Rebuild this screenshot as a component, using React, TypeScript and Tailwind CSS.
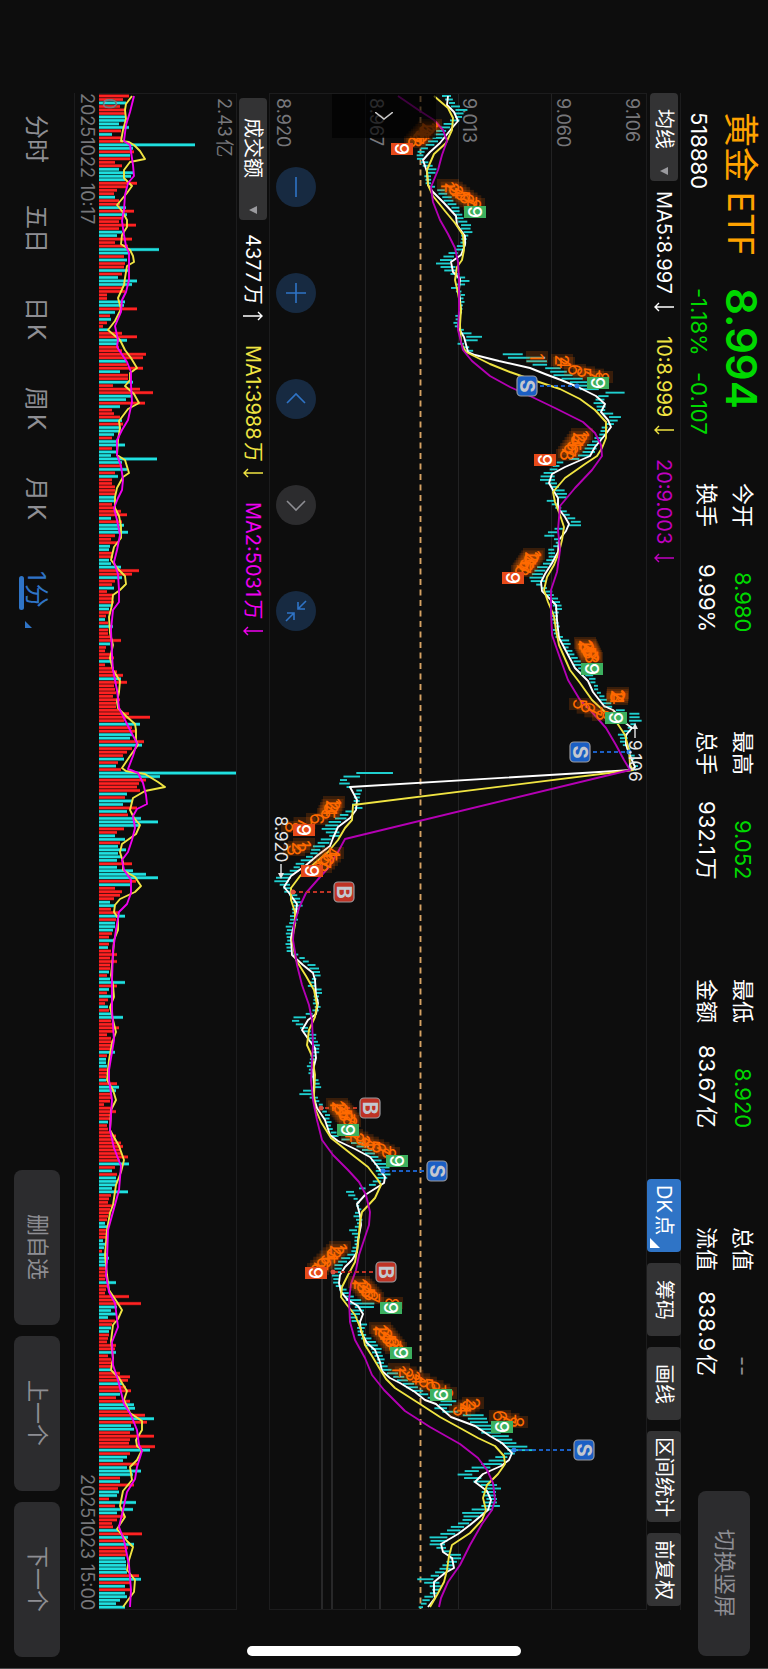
import React, { useState } from 'react';

// The whole screen is laid out in landscape: the inline axis runs from top to bottom,
// the block axis from right to left.

interface Stat {
  label: string;
  value: string;
  tone: string;
}

const stats: Stat[][] = [
  [
    { label: '今开', value: '8.980', tone: 'text-[#00d800]' },
    { label: '换手', value: '9.99%', tone: 'text-white' },
  ],
  [
    { label: '最高', value: '9.052', tone: 'text-[#00d800]' },
    { label: '总手', value: '932.1万', tone: 'text-white' },
  ],
  [
    { label: '最低', value: '8.920', tone: 'text-[#00d800]' },
    { label: '金额', value: '83.67亿', tone: 'text-white' },
  ],
  [
    { label: '总值', value: '--', tone: 'text-[#8e8e93]' },
    { label: '流值', value: '838.9亿', tone: 'text-white' },
  ],
];

const periods = ['分时', '五日', '日K', '周K', '月K', '1分'];
const tools = ['筹码', '画线', '区间统计', '前复权'];
const stockActions = ['删自选', '上一个', '下一个'];

const TOP = 94;
const HEIGHT = 1515;
const BAR_STEP = 3.49;
const barY = (i: number) => TOP + 2 + i * BAR_STEP;

// Turnover of each minute, negative when the price fell
const volumes = [
  30, 24, -27, 21, 27, 26, -26, -26, -20, -30, 22, -13, 23, 24, -96, -34, 35, -31, 31, 16,
  23, -20, -35, -32, -26, 38, 27, 18, 15, -16, 20, 21, -27, 35, -28, 23, 20, 37, 20, -23,
  -18, 33, 16, 29, -60, -30, 25, -28, 26, 25, -29, 23, -19, -38, -33, 24, 26, 8, 8, -26,
  -25, 38, -16, 11, -12, 8, 4, -9, 23, 38, -28, -19, 20, 23, 47, 44, -27, 28, 44, -21,
  29, 29, -34, 14, 41, 54, -33, -27, 46, -21, 13, 15, 21, -23, 24, -21, -21, -15, 13, -17,
  -26, 13, -17, -12, -58, -23, 23, -28, 16, -19, 13, 13, 16, 16, 16, -16, -16, 13, 16, 22,
  28, -12, 23, -25, -22, -29, 16, 12, 18, -11, -10, 14, 14, -10, -12, -22, 40, 33, -23, 16,
  13, -15, 8, 14, 14, 15, -12, -10, 12, 7, -6, 9, -14, 9, 9, 13, 22, -11, 7, 6,
  14, 15, -14, 6, 15, 18, 24, -22, 28, 15, 16, 17, 14, 21, 17, 17, 22, 30, 51, 25,
  -41, 33, 37, -33, -31, 45, -43, 33, 28, 24, -25, 19, -17, 22, -137, -61, 47, 40, 38, 41,
  -28, 26, -33, -24, 38, -28, 29, -42, -59, -41, 25, 18, -16, -26, 21, -19, -27, -19, -22, -18,
  33, -18, -34, -47, -59, 37, -31, 16, 23, 21, 15, -11, -16, 12, 19, -26, 17, -16, -16, -14,
  13, 10, -16, 10, -9, 12, 18, 11, 18, 11, 11, -10, 8, -11, -26, 18, -10, 8, -12, 9,
  6, -9, 10, -14, -24, 12, 14, 20, 15, 8, 12, 15, 13, 11, -16, 8, -7, -7, -8, 9,
  8, 7, -7, 18, -20, -17, 13, 13, 11, 5, 13, 17, 11, 12, -9, 8, 9, 11, 17, 17,
  22, 24, 22, 23, 29, 21, -30, 16, -13, 18, -17, -18, -17, -13, -29, 12, 10, 9, 14, 11,
  11, 9, 8, -6, -9, 7, 7, 8, -4, -7, -5, 3, -8, -10, -9, -8, 7, 6, 7, 6,
  -17, 9, 7, 6, 30, 14, 42, -18, -12, -18, -9, 16, 13, -12, -10, 10, 9, 8, 17, 16,
  -17, 9, 12, 13, 12, -12, 21, 31, 29, -23, 27, 32, -21, 17, 31, -35, -36, 29, 46, -55,
  48, -32, -35, 31, 55, 31, 30, 56, -51, 31, -28, -24, 38, -28, -42, -34, 21, -21, 35, 19,
  -20, -18, 10, -37, 16, -34, -18, 25, 18, 13, 14, -19, 43, -29, 25, -35, 29, 27, 27, -26,
  -27, -27, -27, -28, 40, -42, 32, -26, 32, -26, -28, -21, -17, -26,
];

// [position, low, high] of the one-minute candles at each turning point
const ranges: [number, number, number][] = [
  [97, 443, 452], [103, 448, 454], [110, 455, 467], [117, 455, 462], [121, 448, 458], [127, 440, 450],
  [135, 434, 444], [142, 428, 438], [149, 421, 428], [154, 415, 422], [160, 418, 424], [166, 424, 434],
  [170, 428, 437], [178, 424, 430], [186, 428, 433], [190, 436, 444], [200, 444, 454], [207, 450, 458],
  [215, 455, 462], [225, 460, 470], [232, 463, 472], [240, 461, 466], [250, 455, 463], [255, 446, 456],
  [258, 441, 452], [263, 436, 450], [267, 440, 455], [275, 452, 460], [281, 460, 470], [288, 452, 459],
  [295, 460, 464], [305, 461, 464], [315, 456, 460], [325, 454, 458], [330, 457, 463], [337, 466, 482],
  [341, 465, 478], [344, 457, 463], [351, 467, 474], [354, 502, 520], [357, 505, 546], [361, 526, 547],
  [365, 532, 546], [369, 549, 565], [373, 550, 567], [378, 560, 582], [385, 575, 590], [390, 580, 600],
  [393, 610, 629], [397, 595, 603], [403, 594, 604], [410, 598, 606], [417, 608, 620], [421, 610, 618],
  [427, 603, 609], [435, 598, 604], [441, 592, 601], [448, 585, 597], [456, 578, 591], [463, 556, 562],
  [470, 548, 556], [476, 540, 554], [480, 541, 556], [487, 550, 558], [490, 552, 565], [498, 560, 568],
  [501, 546, 554], [508, 556, 562], [515, 565, 571], [522, 570, 580], [525, 570, 583], [529, 553, 561],
  [533, 548, 558], [536, 544, 554], [541, 558, 561], [550, 549, 555], [560, 547, 555], [568, 537, 548],
  [575, 530, 541], [581, 530, 545], [585, 538, 542], [590, 543, 550], [597, 549, 556], [603, 552, 562],
  [609, 554, 561], [617, 551, 557], [625, 554, 559], [633, 553, 558], [641, 560, 570], [648, 564, 569],
  [655, 570, 576], [665, 574, 582], [675, 585, 593], [685, 593, 597], [695, 598, 602], [702, 600, 610],
  [708, 606, 614], [713, 628, 638], [717, 630, 640], [720, 628, 642], [725, 632, 636], [730, 624, 630],
  [735, 618, 628], [744, 622, 626], [755, 630, 634], [765, 634, 637], [770, 633, 637], [773, 356, 393],
  [777, 343, 357], [780, 340, 347], [784, 338, 349], [788, 350, 354], [791, 357, 363], [797, 354, 360],
  [803, 352, 358], [808, 354, 362], [813, 343, 350], [819, 333, 345], [825, 325, 338], [830, 322, 338],
  [835, 330, 341], [840, 320, 330], [845, 315, 328], [850, 311, 320], [856, 308, 314], [861, 299, 310],
  [867, 294, 300], [872, 287, 297], [878, 275, 290], [881, 275, 290], [885, 280, 290], [892, 285, 292],
  [898, 292, 301], [905, 293, 302], [912, 292, 298], [920, 290, 298], [927, 286, 292], [935, 287, 294],
  [942, 286, 292], [950, 286, 291], [955, 294, 299], [962, 304, 310], [968, 310, 320], [975, 314, 320],
  [980, 312, 316], [985, 306, 312], [987, 312, 322], [993, 315, 321], [1000, 313, 318], [1008, 315, 321],
  [1014, 306, 313], [1017, 293, 306], [1021, 293, 300], [1027, 298, 306], [1035, 309, 316], [1042, 311, 318],
  [1050, 313, 320], [1057, 311, 316], [1065, 307, 312], [1075, 310, 313], [1083, 315, 320], [1087, 315, 321],
  [1091, 303, 312], [1094, 299, 314], [1100, 315, 319], [1107, 320, 324], [1115, 324, 329], [1122, 326, 331],
  [1130, 328, 333], [1137, 333, 340], [1143, 352, 365], [1150, 361, 373], [1157, 370, 378], [1163, 374, 386],
  [1170, 376, 390], [1177, 378, 390], [1182, 372, 380], [1187, 365, 371], [1192, 345, 353], [1196, 350, 357],
  [1200, 355, 358], [1210, 358, 361], [1217, 353, 361], [1224, 358, 362], [1230, 350, 358], [1240, 355, 359],
  [1250, 353, 357], [1257, 343, 352], [1263, 336, 345], [1270, 334, 341], [1277, 332, 339], [1285, 335, 341],
  [1292, 340, 348], [1298, 345, 355], [1304, 350, 376], [1308, 355, 372], [1312, 350, 360], [1320, 350, 358],
  [1325, 358, 367], [1332, 357, 363], [1337, 360, 370], [1345, 366, 378], [1350, 372, 382], [1357, 375, 383],
  [1365, 378, 385], [1372, 385, 396], [1380, 397, 408], [1388, 408, 420], [1395, 418, 428], [1401, 440, 456],
  [1406, 440, 452], [1410, 430, 443], [1415, 463, 484], [1421, 470, 488], [1426, 474, 492], [1432, 480, 500],
  [1438, 496, 512], [1443, 500, 516], [1450, 508, 536], [1454, 503, 512], [1460, 490, 505], [1465, 478, 500],
  [1472, 462, 475], [1475, 458, 473], [1479, 466, 484], [1487, 486, 502], [1493, 482, 496], [1500, 486, 496],
  [1507, 480, 500], [1513, 462, 484], [1520, 463, 472], [1528, 450, 464], [1532, 445, 458], [1537, 430, 448],
  [1544, 430, 446], [1550, 440, 446], [1555, 448, 462], [1560, 450, 460], [1567, 440, 452], [1573, 435, 444],
  [1577, 428, 436], [1580, 415, 434], [1583, 425, 440], [1590, 433, 440], [1597, 425, 434], [1603, 420, 426],
  [1608, 419, 423],
];

const candleAt = (y: number, i: number) => {
  let k = 1;
  while (k < ranges.length - 1 && ranges[k][0] < y) k++;
  const [y0, lo0, hi0] = ranges[k - 1];
  const [y1, lo1, hi1] = ranges[k];
  const t = Math.min(1, Math.max(0, (y - y0) / (y1 - y0)));
  const wobble = ((i * 7) % 5) - 2;
  return { lo: lo0 + (lo1 - lo0) * t + wobble / 2, hi: hi0 + (hi1 - hi0) * t + wobble / 2 };
};

const ma5 =
  '448,96 447,105 454,112 458,121 452,128 440,143 430,152 423,160 427,172 428,185 433,192 444,203 456,216 457,225 465,236 465,245 461,255 451,262 453,272 460,279 459,290 461,310 458,327 464,337 468,352 475,355 499,361 530,368 545,374 561,380 578,387 596,396 605,404 601,412 608,420 611,427 605,435 595,447 590,456 565,467 552,474 549,483 553,490 558,498 558,508 565,517 569,524 566,531 559,540 558,552 552,563 545,574 541,582 542,591 549,598 556,605 557,620 559,638 566,651 575,668 588,681 593,692 604,706 613,710 624,722 632,728 626,735 626,745 631,758 635,767 632,770 350,787 357,800 356,810 350,818 338,827 333,838 330,846 318,855 305,866 291,876 284,887 289,893 297,904 295,920 291,938 292,955 303,965 313,973 315,980 316,995 318,1003 316,1014 308,1020 302,1030 309,1040 315,1048 316,1058 313,1070 314,1085 313,1095 317,1108 325,1120 330,1135 338,1141 355,1149 370,1157 378,1167 385,1177 384,1183 365,1195 357,1204 360,1215 361,1225 358,1240 357,1252 352,1260 345,1267 340,1275 339,1283 341,1292 348,1300 358,1306 363,1314 360,1322 361,1332 367,1343 375,1350 380,1362 382,1371 390,1378 400,1383 415,1392 425,1400 436,1404 451,1417 475,1426 490,1436 502,1443 512,1453 509,1460 501,1466 483,1474 475,1482 487,1491 491,1500 488,1510 470,1525 458,1534 441,1544 443,1552 452,1558 454,1568 445,1573 434,1582 434,1592 435,1598 428,1607';
const ma10 =
  '434,96 448,108 453,118 452,130 446,143 434,154 427,170 428,185 433,196 445,211 455,223 463,235 464,250 462,260 457,267 455,280 458,293 461,310 460,325 461,343 466,352 490,364 510,372 530,379 560,389 580,399 595,410 606,422 606,438 602,448 597,456 585,464 565,478 553,492 555,502 560,515 564,527 562,540 559,552 554,565 547,577 544,590 548,602 554,616 556,630 559,645 570,670 580,683 592,700 605,712 617,723 625,735 629,750 630,765 633,770 353,805 352,820 345,828 338,840 328,852 315,863 300,876 291,888 291,900 295,912 295,925 292,940 296,960 306,976 314,990 317,1005 315,1017 309,1030 307,1045 312,1056 315,1075 314,1095 315,1108 321,1122 331,1138 350,1153 368,1167 378,1180 381,1185 375,1198 362,1212 360,1222 358,1245 355,1262 348,1275 342,1287 341,1297 347,1305 355,1315 362,1332 365,1345 372,1356 378,1366 386,1379 395,1388 420,1404 440,1417 460,1428 478,1438 495,1446 504,1456 505,1464 498,1474 487,1485 483,1498 486,1510 482,1520 470,1533 452,1545 449,1556 447,1570 444,1582 437,1595 430,1607';
const ma20 =
  '398,96 420,111 434,120 443,130 447,141 442,155 438,170 431,187 433,202 440,220 448,234 455,248 458,262 459,280 459,310 458,330 463,350 472,361 490,376 510,387 530,396 555,408 583,422 595,433 601,445 602,456 592,470 575,488 560,506 558,530 560,550 557,572 551,590 551,610 552,635 560,658 568,680 580,700 592,712 606,728 616,745 624,760 630,770 345,839 338,852 328,868 306,893 299,908 294,925 293,940 297,965 302,985 309,1005 312,1020 313,1045 311,1080 313,1100 317,1120 322,1140 333,1155 348,1170 359,1182 366,1195 370,1212 369,1225 364,1240 359,1255 356,1270 351,1284 349,1300 350,1322 355,1340 365,1358 372,1375 384,1390 405,1411 430,1427 460,1444 478,1458 487,1470 493,1483 495,1500 492,1510 482,1524 470,1545 460,1565 448,1582 441,1598 439,1607';
const volMa1 =
  '132,96 126,104 125,110 126,119 123,130 121,141 129,142 134,145 140,151 145,159 130,162 124,170 124,178 132,186 127,193 117,205 122,211 127,220 127,227 122,235 121,244 130,250 133,256 134,262 127,266 125,278 124,285 118,298 121,309 115,321 108,330 120,340 125,350 131,358 137,368 130,373 130,380 125,386 134,394 139,403 128,409 119,421 120,428 118,440 117,455 125,460 129,473 123,477 117,488 115,497 115,508 119,516 121,526 121,538 114,547 111,560 118,569 125,576 126,584 120,590 113,595 112,605 109,617 110,633 113,645 110,658 113,670 120,681 119,692 117,702 118,708 126,716 135,724 136,730 136,740 138,745 130,756 122,768 126,771 145,774 158,782 165,787 145,791 133,798 130,810 134,818 140,825 136,834 122,844 120,852 123,862 123,870 135,877 141,886 135,892 120,899 115,905 114,912 118,918 118,930 114,940 113,955 111,975 113,985 114,997 110,1007 113,1020 116,1032 112,1043 109,1060 107,1080 113,1090 116,1100 111,1110 110,1130 119,1146 124,1160 121,1172 116,1185 113,1205 110,1213 107,1230 105,1255 107,1275 109,1290 117,1302 122,1310 118,1319 113,1325 111,1341 113,1358 111,1370 119,1378 127,1391 124,1400 130,1413 142,1421 142,1430 136,1440 137,1446 142,1450 137,1460 130,1467 132,1480 123,1491 120,1506 125,1517 117,1529 127,1541 133,1547 129,1560 127,1570 135,1580 134,1592 128,1600 123,1607';
const volMa2 =
  '134,96 130,112 126,125 124,141 130,145 133,165 134,176 128,183 125,195 124,210 122,221 124,235 126,246 129,253 129,280 126,292 122,300 121,312 115,326 118,340 117,347 127,362 131,372 131,385 132,402 128,420 122,430 117,440 117,455 121,466 123,480 122,490 118,498 114,508 117,520 120,535 117,550 114,562 118,574 119,590 119,602 113,610 111,630 112,655 113,670 117,690 119,708 125,720 131,732 137,743 133,756 128,769 138,773 143,783 146,795 147,804 137,809 133,816 135,828 132,840 128,852 122,860 124,870 131,880 131,893 127,904 119,912 116,930 113,950 112,980 112,1010 114,1040 109,1070 109,1080 112,1100 110,1130 114,1148 121,1166 119,1190 113,1212 108,1230 107,1260 106,1275 109,1292 115,1303 118,1327 112,1342 113,1365 118,1380 124,1404 131,1415 137,1430 139,1445 142,1451 137,1467 135,1479 127,1492 123,1510 119,1527 124,1540 129,1565 131,1590 130,1607';

// Runs of countdown digits: text, first point, last point
const counts: [string, number, number, number, number][] = [
  ['12345678', 431, 125, 415, 142],
  ['12345678', 448, 185, 474, 204],
  ['1', 537, 357, 537, 357],
  ['24', 562, 360, 564, 363],
  ['6578', 575, 370, 602, 377],
  ['12345678', 582, 434, 567, 455],
  ['12345678', 534, 554, 522, 571],
  ['12345678', 585, 643, 592, 658],
  ['1234', 618, 693, 617, 699],
  ['5678', 580, 704, 603, 715],
  ['12345', 334, 802, 328, 814],
  ['678', 317, 819, 292, 827],
  ['123', 304, 844, 294, 850],
  ['45678', 333, 853, 321, 867],
  ['12345678', 337, 1104, 350, 1121],
  ['12345678', 352, 1135, 389, 1153],
  ['12345678', 340, 1247, 318, 1269],
  ['1234567', 359, 1282, 373, 1298],
  ['8', 392, 1303, 392, 1303],
  ['12345678', 380, 1328, 396, 1348],
  ['12345678', 399, 1369, 446, 1393],
  ['2345', 473, 1403, 460, 1411],
  ['678', 500, 1416, 517, 1422],
];

const nines: [number, number, boolean][] = [
  [402, 149, false], [475, 212, true], [598, 383, true], [545, 460, false], [513, 578, false],
  [592, 669, true], [616, 718, true], [304, 830, false], [312, 871, false], [348, 1130, true],
  [397, 1161, true], [316, 1273, false], [391, 1308, true], [401, 1353, true], [441, 1395, true],
  [502, 1427, true],
];

// Buy and sell marks: letter, badge x, y, x of the candle
const marks: [string, number, number, number][] = [
  ['S', 527, 386, 577], ['S', 580, 752, 629], ['B', 344, 892, 293], ['B', 370, 1108, 321],
  ['S', 437, 1171, 383], ['B', 386, 1272, 333], ['S', 584, 1450, 514],
];

const Turned: React.FC<{ x: number; y: number; size: number; className: string; children: React.ReactNode }> = ({
  x,
  y,
  size,
  className,
  children,
}) => (
  <text
    transform={`translate(${x} ${y}) rotate(90)`}
    y={size * 0.36}
    fontSize={size}
    className={className}
  >
    {children}
  </text>
);

const PriceChart: React.FC = () => (
  <svg
    viewBox={`270 ${TOP} 376 ${HEIGHT}`}
    className="h-full w-full [writing-mode:horizontal-tb]"
    role="img"
    aria-label="价格走势"
  >
    {[365, 458, 551].map((x) => (
      <line key={x} x1={x + 0.5} x2={x + 0.5} y1={TOP} y2={TOP + HEIGHT} stroke="#222223" />
    ))}
    <path d="M322 1140V1609M332 1150V1609M380 1364V1609" stroke="#2c2c2d" strokeWidth={1.8} />
    <line x1={420.5} x2={420.5} y1={96} y2={1609} stroke="#d6a263" strokeWidth={1.9} strokeDasharray="6 4.5" />

    {[
      [283, '8.920'], [376, '8.967'], [469, '9.013'], [563, '9.060'], [632, '9.106'],
    ].map(([x, label]) => (
      <Turned key={label} x={Number(x)} y={98} size={18} className="fill-[#77777b]">{label}</Turned>
    ))}

    <g stroke="#1fcfcf" strokeWidth={1.9}>
      {volumes.map((_, i) => {
        const y = barY(i);
        const { lo, hi } = candleAt(y, i);
        return <line key={i} x1={lo} x2={hi} y1={y} y2={y} />;
      })}
    </g>
    <g fill="none" strokeWidth={1.9} strokeLinejoin="round">
      <polyline points={ma5} stroke="#ffffff" />
      <polyline points={ma10} stroke="#f0e442" />
      <polyline points={ma20} stroke="#b400b4" />
    </g>

    {marks.map(([letter, x, y, dot]) => {
      const blue = letter === 'S';
      const color = blue ? '#1b5fc4' : '#bf3325';
      return (
        <g key={`${x}-${y}`}>
          <line x1={x + (dot > x ? 13 : -13)} x2={dot} y1={y} y2={y} stroke={color} strokeWidth={1.8} strokeDasharray="4 3" />
          <circle cx={dot} cy={y} r={2.5} fill={blue ? '#2f7de6' : '#e0503f'} />
          <rect x={x - 10} y={y - 10} width={20} height={20} rx={4} fill={color} stroke="#9a9a9e" strokeWidth={1.2} />
          <Turned x={x} y={y} size={20} className="fill-[#c4c8d0] font-bold [text-anchor:middle]">{letter}</Turned>
        </g>
      );
    })}

    {counts.map(([digits, x0, y0, x1, y1]) =>
      digits.split('').map((digit, i) => {
        const t = digits.length > 1 ? i / (digits.length - 1) : 0;
        const x = x0 + (x1 - x0) * t;
        const y = y0 + (y1 - y0) * t;
        return (
          <g key={`${x0}-${y0}-${digit}`}>
            <rect x={x - 11} y={y - 6} width={22} height={12} fill="#ff6a00" fillOpacity={0.18} />
            <Turned x={x} y={y} size={19} className="fill-[#ff6a00] [text-anchor:middle]">{digit}</Turned>
          </g>
        );
      }),
    )}
    {nines.map(([x, y, up]) => (
      <g key={`${x}-${y}`}>
        <rect x={x - 11} y={y - 6} width={22} height={12} fill={up ? '#3cb05f' : '#e64a19'} />
        <Turned x={x} y={y} size={19} className="fill-white font-medium [text-anchor:middle]">9</Turned>
      </g>
    ))}

    <path d="M635 738V727" stroke="#e8e8e8" strokeWidth={1.4} />
    <path d="M635 723l-3 6h6z" fill="#e8e8e8" />
    <Turned x={635} y={740} size={17} className="fill-[#e8e8e8]">9.106</Turned>
    <Turned x={281} y={816} size={17} className="fill-[#e8e8e8]">8.920</Turned>
    <path d="M281 864V875" stroke="#e8e8e8" strokeWidth={1.4} />
    <path d="M281 879l-3 -6h6z" fill="#e8e8e8" />
  </svg>
);

const VolumeChart: React.FC = () => (
  <svg
    viewBox={`99 ${TOP} 137 ${HEIGHT}`}
    className="h-full w-full [writing-mode:horizontal-tb]"
    role="img"
    aria-label="成交额"
  >
    {volumes.map((v, i) => (
      <g key={i}>
        <rect x={99} y={barY(i) - 1.75} width={Math.abs(v)} height={3.5} fill={v < 0 ? '#0e6868' : '#781212'} />
        <rect x={99} y={barY(i) - 1.2} width={Math.abs(v)} height={2.4} fill={v < 0 ? '#20e0e0' : '#ff2222'} />
      </g>
    ))}
    <Turned x={109} y={98} size={18} className="fill-[#77777b]">0</Turned>
    <Turned x={224} y={98} size={18} className="fill-[#77777b]">2.43亿</Turned>
    <g fill="none" strokeWidth={1.9} strokeLinejoin="round">
      <polyline points={volMa1} stroke="#f0e442" />
      <polyline points={volMa2} stroke="#f000f0" />
    </g>
  </svg>
);

const SelectButton: React.FC<{ label: string; className: string }> = ({ label, className }) => (
  <button className={`flex w-7 shrink-0 items-center justify-between rounded bg-[#333334] text-white ${className}`}>
    {label}
    <svg viewBox="0 0 8 8" className="h-2 w-2 shrink-0" aria-hidden="true">
      <path d="M8 0v8L0 4z" fill="#9a9a9e" />
    </svg>
  </button>
);

const Arrow: React.FC<{ up?: boolean }> = ({ up }) => (
  <svg viewBox="0 0 20 10" className="h-2.5 w-5" fill="none" stroke="currentColor" strokeWidth={1.4} aria-hidden="true">
    <path d={up ? 'M0 5H19M15 1L19 5L15 9' : 'M20 5H1M5 1L1 5L5 9'} />
  </svg>
);

const chartButtons = [
  { label: '缩小', path: 'M12 2V22' },
  { label: '放大', path: 'M12 2V22M2 12H22' },
  { label: '左移', path: 'M3 16L12 7L21 16' },
  { label: '右移', path: 'M3 8L12 17L21 8', disabled: true },
  { label: '收起', path: 'M14 3V10H21M14 10L22 2M3 14H10V21M10 14L2 22' },
];

const App: React.FC = () => {
  const [period, setPeriod] = useState('1分');

  return (
    <main className="relative flex h-screen w-full flex-col overflow-hidden border-b border-[#4a4a4b] bg-[#0d0d0d] font-['Inter','Noto_Sans_CJK_SC',sans-serif] [text-autospace:normal] [text-orientation:sideways] [writing-mode:vertical-rl]">
      <header className="flex w-[87px] shrink-0 pt-[112px] pr-[7px] pb-3 whitespace-nowrap text-white">
        <div className="flex h-[176px] flex-col gap-2">
          <h1 className="text-[35px] leading-10 text-[#ffa200]">黄金 ETF</h1>
          <p className="text-[22px] leading-7">518880</p>
        </div>
        <div className="flex h-[195px] flex-col gap-2 text-[#00d800]">
          <p className="text-[42px] leading-10 font-semibold">8.994</p>
          <p className="flex gap-4 text-[22px] leading-7">
            <span>-1.18%</span>
            <span>-0.107</span>
          </p>
        </div>
        <div className="flex gap-[99px] pr-1 text-[22px] leading-7">
          {stats.map((group) => (
            <dl key={group[0].label} className="flex h-[149px] flex-col gap-2">
              {group.map((stat) => (
                <div key={stat.label} className="flex justify-between">
                  <dt>{stat.label}</dt>
                  <dd className={stat.tone}>{stat.value}</dd>
                </div>
              ))}
            </dl>
          ))}
        </div>
        <button className="mt-auto mr-[11px] h-[165px] w-[52px] rounded-lg bg-[#2c2c2e] text-[22px] text-[#8e8e93]">
          切换竖屏
        </button>
      </header>

      <section className="flex min-w-0 flex-1 flex-col pt-[93px] pb-[58px]">
        <div className="flex w-[35px] shrink-0 items-center border-r border-l border-[#1c1c1d] text-xl leading-7 whitespace-nowrap">
          <SelectButton label="均线" className="h-[88px] pt-4 pb-1.5" />
          <span className="mt-2.5 flex items-center gap-2 text-white">MA5:8.997 <Arrow /></span>
          <span className="mt-6 flex items-center gap-2 text-[#f0e442]">10:8.999 <Arrow /></span>
          <span className="mt-6 flex items-center gap-2 text-[#c000c0]">20:9.003 <Arrow /></span>
          <div className="mt-auto mb-1 flex gap-[11px] text-white">
            <button className="relative h-[73px] w-[34px] rounded-sm bg-[#2f74c6] pb-2.5">
              DK点
              <svg viewBox="0 0 10 10" className="absolute bottom-1 left-[3px] h-2.5 w-2.5" aria-hidden="true">
                <path d="M0 0V10H10z" fill="#fff" />
              </svg>
            </button>
            {tools.map((tool) => (
              <button
                key={tool}
                className={`w-[34px] rounded-sm bg-[#333334] ${tool === '区间统计' ? 'h-[91px]' : 'h-[73px]'}`}
              >
                {tool}
              </button>
            ))}
          </div>
        </div>

        <div className="relative min-w-0 flex-[376] border-t border-b border-[#1c1c1d]">
          <PriceChart />
          <button aria-label="展开" className="absolute top-0 left-[62px] flex h-11 w-[104px] items-center justify-center bg-black/65">
            <svg viewBox="0 0 18 8" className="h-2 w-[18px]" fill="none" stroke="#c8c8c8" strokeWidth={1.5} aria-hidden="true">
              <path d="M0 0L9 7L18 0" />
            </svg>
          </button>
          <div className="absolute top-[73px] left-1.5 flex gap-[66px]">
            {chartButtons.map((b) => (
              <button
                key={b.label}
                aria-label={b.label}
                className={`flex h-10 w-10 items-center justify-center rounded-full ${b.disabled ? 'bg-[#2c2c2e] text-[#8e8e93]' : 'bg-[#172a41] text-[#2f74c6]'}`}
              >
                <svg viewBox="0 0 24 24" className="h-6 w-6" fill="none" stroke="currentColor" strokeWidth={1.6} aria-hidden="true">
                  <path d={b.path} />
                </svg>
              </button>
            ))}
          </div>
        </div>

        <div className="flex w-[34px] shrink-0 items-center border-r border-l border-[#1c1c1d] text-xl leading-7 whitespace-nowrap">
          <SelectButton label="成交额" className="mt-[5px] h-[122px] pt-5 pb-1.5" />
          <span className="mt-3.5 flex items-center gap-1.5 text-white">4377万 <Arrow up /></span>
          <span className="mt-6 flex items-center gap-1.5 text-[#f0e442]">MA1:3988万 <Arrow /></span>
          <span className="mt-6 flex items-center gap-1.5 text-[#f000f0]">MA2:5031万 <Arrow /></span>
        </div>

        <div className="min-w-0 flex-[137] border-t border-b border-[#1c1c1d]">
          <VolumeChart />
        </div>

        <div className="flex w-[25px] shrink-0 justify-between border-l border-[#1c1c1d] pr-0.5 text-lg leading-5 whitespace-nowrap text-[#77777b]">
          <time>20251022 10:17</time>
          <time>20251023 15:00</time>
        </div>
      </section>

      <footer className="flex w-[74px] shrink-0 items-center pt-[94px] pb-[11px] whitespace-nowrap">
        <nav className="mr-[3px] flex">
          {periods.map((p) => (
            <button
              key={p}
              onClick={() => setPeriod(p)}
              className={`relative flex h-[90px] w-[74px] items-center justify-center text-2xl ${p === period ? 'text-[#2f74c6]' : 'text-[#8e8e93]'}`}
            >
              {p}
              {p === period && <span className="absolute top-8 left-[20px] h-[34px] w-[5px] rounded-full bg-[#2f74c6]" />}
              {p === '1分' && (
                <svg viewBox="0 0 7 7" className="absolute bottom-1.5 left-[26px] h-[7px] w-[7px]" aria-hidden="true">
                  <path d="M0 0V7H7z" fill="#2f74c6" />
                </svg>
              )}
            </button>
          ))}
        </nav>
        <div className="mt-auto flex gap-[11px]">
          {stockActions.map((action) => (
            <button key={action} className="h-[155px] w-[46px] rounded-lg bg-[#2c2c2e] text-[22px] text-[#8e8e93]">
              {action}
            </button>
          ))}
        </div>
      </footer>

      <div className="absolute bottom-3 left-1/2 h-[10px] w-[274px] -translate-x-1/2 rounded-full bg-white" />
    </main>
  );
};

export default App;
